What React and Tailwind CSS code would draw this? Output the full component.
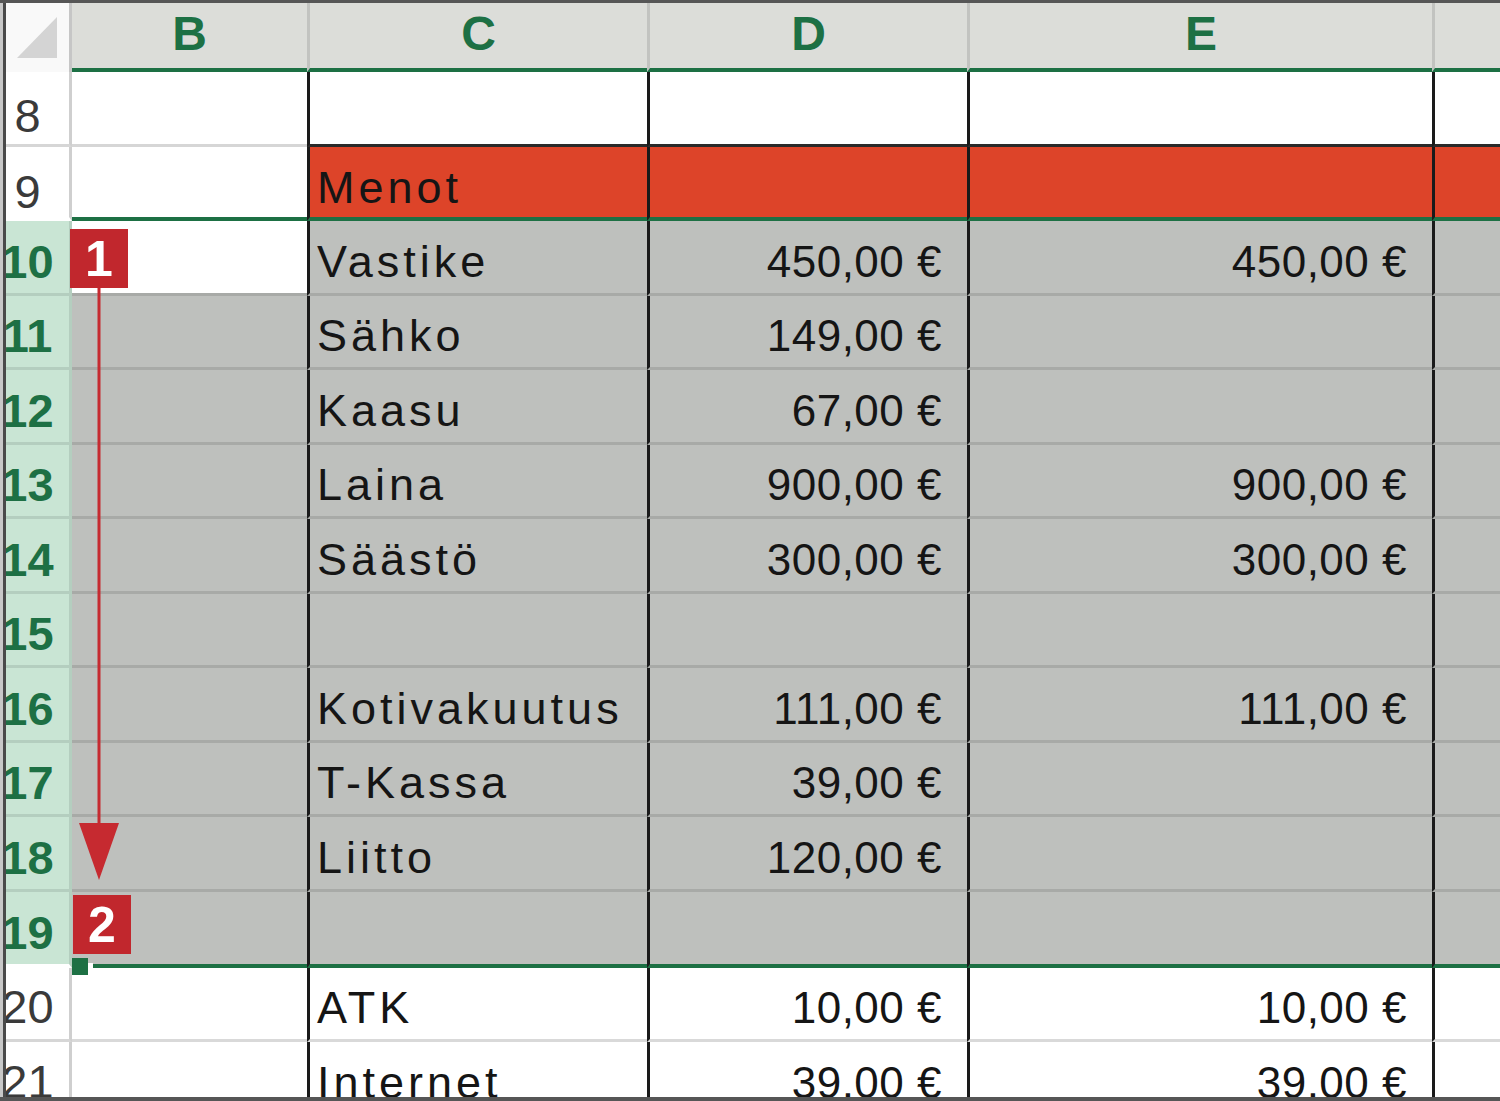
import React from "react";

const FONT = "font-['Liberation_Sans',Arial,sans-serif]";

const SEL = [
  ["10", "Vastike", "450,00 €", "450,00 €"],
  ["11", "Sähko", "149,00 €", ""],
  ["12", "Kaasu", "67,00 €", ""],
  ["13", "Laina", "900,00 €", "900,00 €"],
  ["14", "Säästö", "300,00 €", "300,00 €"],
  ["15", "", "", ""],
  ["16", "Kotivakuutus", "111,00 €", "111,00 €"],
  ["17", "T-Kassa", "39,00 €", ""],
  ["18", "Liitto", "120,00 €", ""],
  ["19", "", "", ""],
];
const SEL_H = ["h-[75px]", "h-[74px]", "h-[75px]", "h-[74px]", "h-[75px]", "h-[74px]", "h-[75px]", "h-[74px]", "h-[75px]", "h-[76px]"];

function Row({ h, hdrCls, hdrPad, n, bCls, cfCls, c, d, e, pad, children }) {
  return (
    <div className={"flex shrink-0 " + h}>
      <div className={"w-[66px] shrink-0 flex items-end justify-center pr-[20px] overflow-hidden border-r-[3px] " + hdrCls + " " + hdrPad}>
        <span className="text-[47px] leading-none">{n}</span>
      </div>
      <div className={"relative w-[235px] shrink-0 " + bCls}>{children}</div>
      <div className={"w-[340px] shrink-0 flex items-end pl-[7px] overflow-hidden whitespace-nowrap border-l-[3px] border-l-[#1a1a1a] " + cfCls + " " + pad}>
        <span className="text-[45px] leading-none tracking-[4px] text-[#151515]">{c}</span>
      </div>
      <div className={"w-[320px] shrink-0 flex items-end justify-end pr-[25px] whitespace-nowrap border-l-[3px] border-l-[#1a1a1a] " + cfCls + " " + pad}>
        <span className="text-[44px] leading-none tracking-[0.5px] text-[#151515]">{d}</span>
      </div>
      <div className={"w-[465px] shrink-0 flex items-end justify-end pr-[25px] whitespace-nowrap border-l-[3px] border-l-[#1a1a1a] " + cfCls + " " + pad}>
        <span className="text-[44px] leading-none tracking-[0.5px] text-[#151515]">{e}</span>
      </div>
      <div className={"flex-1 border-l-[3px] border-l-[#1a1a1a] " + cfCls}></div>
    </div>
  );
}

export default function App() {
  return (
    <div className="w-[1500px] h-[1101px] overflow-hidden bg-[#c8c8c8] border-t-[3px] border-b-[4px] border-[#565656] pl-[3px]">
      <div className={"relative h-full overflow-hidden bg-white border-l-[3px] border-l-[#4a4a4a] flex flex-col " + FONT}>
        {/* column header */}
        <div className="flex shrink-0 h-[69px]">
          <div className="w-[66px] shrink-0 bg-[#f9f9f9] border-r-[3px] border-r-[#c6c6c6] flex items-end justify-end pr-[12px] pb-[14px]">
            <svg width="40" height="41" viewBox="0 0 40 41">
              <polygon points="0,41 40,0 40,41" fill="#d4d4d4" />
            </svg>
          </div>
          <div className="w-[235px] shrink-0 bg-[#dcddd9] border-b-4 border-b-[#1d7044] flex items-center justify-center pb-[4px]">
            <span className="text-[48px] leading-none font-bold text-[#1d7044]">B</span>
          </div>
          <div className="w-[340px] shrink-0 bg-[#dcddd9] border-b-4 border-b-[#1d7044] border-l-[3px] border-l-[#c2c3c0] flex items-center justify-center pb-[4px]">
            <span className="text-[48px] leading-none font-bold text-[#1d7044]">C</span>
          </div>
          <div className="w-[320px] shrink-0 bg-[#dcddd9] border-b-4 border-b-[#1d7044] border-l-[3px] border-l-[#c2c3c0] flex items-center justify-center pb-[4px]">
            <span className="text-[48px] leading-none font-bold text-[#1d7044]">D</span>
          </div>
          <div className="w-[465px] shrink-0 bg-[#dcddd9] border-b-4 border-b-[#1d7044] border-l-[3px] border-l-[#c2c3c0] flex items-center justify-center pb-[4px]">
            <span className="text-[48px] leading-none font-bold text-[#1d7044]">E</span>
          </div>
          <div className="flex-1 bg-[#dcddd9] border-b-4 border-b-[#1d7044] border-l-[3px] border-l-[#c2c3c0]"></div>
        </div>

        {/* row 8 */}
        <Row
          h="h-[75px]"
          n="8"
          hdrCls="bg-white text-[#3a3a3a] border-r-[#cfcfcf] border-b-[3px] border-b-[#d6d6d6]"
          hdrPad="pb-[5px]"
          bCls="bg-white border-b-[3px] border-b-[#d6d6d6]"
          cfCls="bg-white border-b-[3px] border-b-[#2a2a2a]"
          pad="pb-[9px]"
        />

        {/* row 9 */}
        <Row
          h="h-[74px]"
          n="9"
          hdrCls="bg-white text-[#3a3a3a] border-r-[#cfcfcf] border-b-4 border-b-white"
          hdrPad="pb-[2px]"
          bCls="bg-white border-b-4 border-b-[#1d7044]"
          cfCls="bg-[#dd4429] border-b-4 border-b-[#1d7044]"
          pad="pb-[7px]"
          c="Menot"
        />

        {SEL.map((r, i) => {
          const last = i === SEL.length - 1;
          return (
            <Row
              key={r[0]}
              h={SEL_H[i]}
              n={r[0]}
              hdrCls={
                last
                  ? "bg-[#c9e5d4] text-[#1d7044] font-bold border-r-[#b4cebf] border-b-4 border-b-white"
                  : "bg-[#c9e5d4] text-[#1d7044] font-bold border-r-[#b4cebf] border-b-[3px] border-b-[#b4cebf]"
              }
              hdrPad="pb-[8px]"
              bCls={
                last
                  ? "bg-[#bec0bd] border-b-4 border-b-[#1d7044]"
                  : i === 0
                  ? "bg-white border-b-[3px] border-b-[#a8aaa7]"
                  : "bg-[#bec0bd] border-b-[3px] border-b-[#a8aaa7]"
              }
              cfCls={
                last
                  ? "bg-[#bec0bd] border-b-4 border-b-[#1d7044]"
                  : "bg-[#bec0bd] border-b-[3px] border-b-[#a8aaa7]"
              }
              pad="pb-[9px]"
              c={r[1]}
              d={r[2]}
              e={r[3]}
            >
              {i === 0 && (
                <div className="absolute left-[-2px] top-[8px] w-[58px] h-[59px] bg-[#c1272d] flex items-center justify-center">
                  <span className="text-[50px] leading-none font-bold text-white">1</span>
                </div>
              )}
              {last && (
                <>
                  <div className="absolute left-[1px] top-[3px] w-[58px] h-[59px] bg-[#c1272d] flex items-center justify-center">
                    <span className="text-[50px] leading-none font-bold text-white">2</span>
                  </div>
                  <div className="absolute left-0 bottom-[-11px] w-[16px] h-[17px] bg-[#1d7044] z-10"></div>
                  <div className="absolute left-[16px] bottom-[-4px] w-[5px] h-[5px] bg-white z-10"></div>
                </>
              )}
            </Row>
          );
        })}

        {/* row 20 */}
        <Row
          h="h-[74px]"
          n="20"
          hdrCls="bg-white text-[#3a3a3a] border-r-[#cfcfcf] border-b-[3px] border-b-[#d6d6d6]"
          hdrPad="pb-[9px]"
          bCls="bg-white border-b-[3px] border-b-[#d9d9d9]"
          cfCls="bg-white border-b-[3px] border-b-[#d9d9d9]"
          pad="pb-[9px]"
          c="ATK"
          d="10,00 €"
          e="10,00 €"
        />
        {/* row 21 */}
        <Row
          h="h-[75px]"
          n="21"
          hdrCls="bg-white text-[#3a3a3a] border-r-[#cfcfcf] border-b-[3px] border-b-[#d6d6d6]"
          hdrPad="pb-[9px]"
          bCls="bg-white border-b-[3px] border-b-[#d9d9d9]"
          cfCls="bg-white border-b-[3px] border-b-[#d9d9d9]"
          pad="pb-[9px]"
          c="Internet"
          d="39,00 €"
          e="39,00 €"
        />

        {/* arrow annotation */}
        <svg className="absolute left-[73px] top-[285px]" width="40" height="592" viewBox="0 0 40 592">
          <rect x="18.5" y="0" width="3" height="540" fill="#c62a30" />
          <polygon points="0,535 40,535 20,592" fill="#c62a30" />
        </svg>
      </div>
    </div>
  );
}
